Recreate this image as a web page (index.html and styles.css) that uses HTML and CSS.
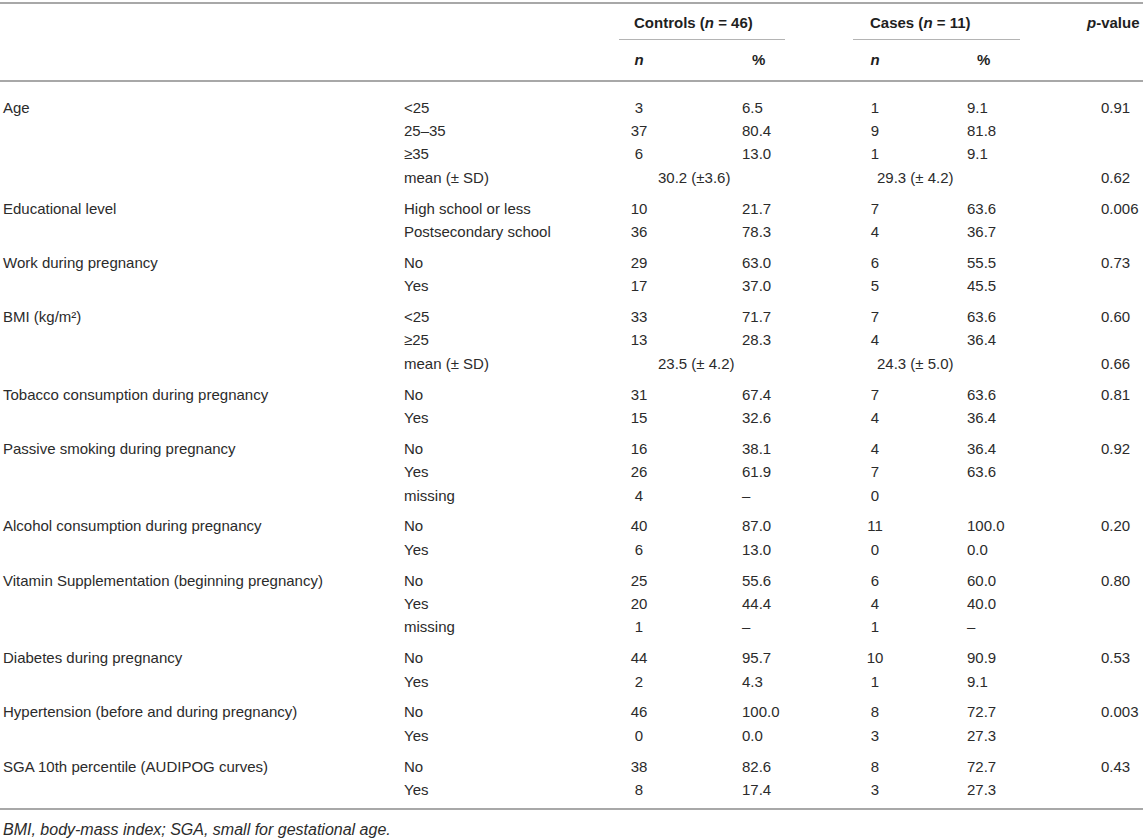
FILE: index.html
```html
<!DOCTYPE html>
<html lang="en">
<head>
<meta charset="utf-8">
<title>Characteristics of cases and controls</title>
<link rel="stylesheet" href="styles.css">
</head>
<body>
<div class="wrap">
<table class="tbl">
  <colgroup>
    <col class="w1"><col class="w2"><col class="w3"><col class="w4"><col class="w5"><col class="w6"><col class="w7">
  </colgroup>
  <thead>
    <tr class="h1">
      <th rowspan="2"></th>
      <th rowspan="2"></th>
      <th colspan="2" class="grp"><div class="grp-in grp-ctrl">Controls (<i>n</i> = 46)</div></th>
      <th colspan="2" class="grp"><div class="grp-in grp-case">Cases (<i>n</i> = 11)</div></th>
      <th rowspan="2" class="pv"><i>p</i>-value</th>
    </tr>
    <tr class="h2">
      <th class="cn"><i>n</i></th>
      <th class="hp-ctrl">%</th>
      <th class="cn"><i>n</i></th>
      <th class="hp-case">%</th>
    </tr>
  </thead>
  <tbody>
    <tr class="gs first"><td class="c1">Age</td><td class="c2">&lt;25</td><td class="cn">3</td><td class="pc">6.5</td><td class="cn">1</td><td class="pk">9.1</td><td class="p">0.91</td></tr>
    <tr><td class="c1"></td><td class="c2">25–35</td><td class="cn">37</td><td class="pc">80.4</td><td class="cn">9</td><td class="pk">81.8</td><td class="p"></td></tr>
    <tr><td class="c1"></td><td class="c2">≥35</td><td class="cn">6</td><td class="pc">13.0</td><td class="cn">1</td><td class="pk">9.1</td><td class="p"></td></tr>
    <tr><td class="c1"></td><td class="c2">mean (± SD)</td><td colspan="2" class="mc">30.2 (±3.6)</td><td colspan="2" class="mk">29.3 (± 4.2)</td><td class="p">0.62</td></tr>

    <tr class="gs"><td class="c1">Educational level</td><td class="c2">High school or less</td><td class="cn">10</td><td class="pc">21.7</td><td class="cn">7</td><td class="pk">63.6</td><td class="p">0.006</td></tr>
    <tr><td class="c1"></td><td class="c2">Postsecondary school</td><td class="cn">36</td><td class="pc">78.3</td><td class="cn">4</td><td class="pk">36.7</td><td class="p"></td></tr>

    <tr class="gs"><td class="c1">Work during pregnancy</td><td class="c2">No</td><td class="cn">29</td><td class="pc">63.0</td><td class="cn">6</td><td class="pk">55.5</td><td class="p">0.73</td></tr>
    <tr><td class="c1"></td><td class="c2">Yes</td><td class="cn">17</td><td class="pc">37.0</td><td class="cn">5</td><td class="pk">45.5</td><td class="p"></td></tr>

    <tr class="gs"><td class="c1">BMI (kg/m²)</td><td class="c2">&lt;25</td><td class="cn">33</td><td class="pc">71.7</td><td class="cn">7</td><td class="pk">63.6</td><td class="p">0.60</td></tr>
    <tr><td class="c1"></td><td class="c2">≥25</td><td class="cn">13</td><td class="pc">28.3</td><td class="cn">4</td><td class="pk">36.4</td><td class="p"></td></tr>
    <tr><td class="c1"></td><td class="c2">mean (± SD)</td><td colspan="2" class="mc">23.5 (± 4.2)</td><td colspan="2" class="mk">24.3 (± 5.0)</td><td class="p">0.66</td></tr>

    <tr class="gs"><td class="c1">Tobacco consumption during pregnancy</td><td class="c2">No</td><td class="cn">31</td><td class="pc">67.4</td><td class="cn">7</td><td class="pk">63.6</td><td class="p">0.81</td></tr>
    <tr><td class="c1"></td><td class="c2">Yes</td><td class="cn">15</td><td class="pc">32.6</td><td class="cn">4</td><td class="pk">36.4</td><td class="p"></td></tr>

    <tr class="gs"><td class="c1">Passive smoking during pregnancy</td><td class="c2">No</td><td class="cn">16</td><td class="pc">38.1</td><td class="cn">4</td><td class="pk">36.4</td><td class="p">0.92</td></tr>
    <tr><td class="c1"></td><td class="c2">Yes</td><td class="cn">26</td><td class="pc">61.9</td><td class="cn">7</td><td class="pk">63.6</td><td class="p"></td></tr>
    <tr><td class="c1"></td><td class="c2">missing</td><td class="cn">4</td><td class="pc">–</td><td class="cn">0</td><td class="pk"></td><td class="p"></td></tr>

    <tr class="gs"><td class="c1">Alcohol consumption during pregnancy</td><td class="c2">No</td><td class="cn">40</td><td class="pc">87.0</td><td class="cn">11</td><td class="pk">100.0</td><td class="p">0.20</td></tr>
    <tr><td class="c1"></td><td class="c2">Yes</td><td class="cn">6</td><td class="pc">13.0</td><td class="cn">0</td><td class="pk">0.0</td><td class="p"></td></tr>

    <tr class="gs"><td class="c1">Vitamin Supplementation (beginning pregnancy)</td><td class="c2">No</td><td class="cn">25</td><td class="pc">55.6</td><td class="cn">6</td><td class="pk">60.0</td><td class="p">0.80</td></tr>
    <tr><td class="c1"></td><td class="c2">Yes</td><td class="cn">20</td><td class="pc">44.4</td><td class="cn">4</td><td class="pk">40.0</td><td class="p"></td></tr>
    <tr><td class="c1"></td><td class="c2">missing</td><td class="cn">1</td><td class="pc">–</td><td class="cn">1</td><td class="pk">–</td><td class="p"></td></tr>

    <tr class="gs"><td class="c1">Diabetes during pregnancy</td><td class="c2">No</td><td class="cn">44</td><td class="pc">95.7</td><td class="cn">10</td><td class="pk">90.9</td><td class="p">0.53</td></tr>
    <tr><td class="c1"></td><td class="c2">Yes</td><td class="cn">2</td><td class="pc">4.3</td><td class="cn">1</td><td class="pk">9.1</td><td class="p"></td></tr>

    <tr class="gs"><td class="c1">Hypertension (before and during pregnancy)</td><td class="c2">No</td><td class="cn">46</td><td class="pc">100.0</td><td class="cn">8</td><td class="pk">72.7</td><td class="p">0.003</td></tr>
    <tr><td class="c1"></td><td class="c2">Yes</td><td class="cn">0</td><td class="pc">0.0</td><td class="cn">3</td><td class="pk">27.3</td><td class="p"></td></tr>

    <tr class="gs"><td class="c1">SGA 10th percentile (AUDIPOG curves)</td><td class="c2">No</td><td class="cn">38</td><td class="pc">82.6</td><td class="cn">8</td><td class="pk">72.7</td><td class="p">0.43</td></tr>
    <tr class="last"><td class="c1"></td><td class="c2">Yes</td><td class="cn">8</td><td class="pc">17.4</td><td class="cn">3</td><td class="pk">27.3</td><td class="p"></td></tr>
  </tbody>
</table>
<p class="note"><i>BMI, body-mass index; SGA, small for gestational age.</i></p>
</div>
</body>
</html>
```

FILE: styles.css
```css
html, body {
  margin: 0;
  padding: 0;
  background: #ffffff;
}

body {
  font-family: "Liberation Sans", Arial, Helvetica, sans-serif;
  color: #2b2b2b;
}

.wrap {
  padding-top: 2px;
  width: 1143px;
}

.tbl {
  width: 1143px;
  table-layout: fixed;
  border-collapse: separate;
  border-spacing: 0;
  border-top: 2px solid #a8a8a8;
  border-bottom: 2px solid #a8a8a8;
  font-size: 15px;
}

.w1 { width: 400px; }
.w2 { width: 200px; }
.w3 { width: 78px; }
.w4 { width: 162px; }
.w5 { width: 70px; }
.w6 { width: 170px; }
.w7 { width: 63px; }

.tbl th,
.tbl td {
  padding: 0;
  text-align: left;
  vertical-align: top;
  white-space: nowrap;
}

.tbl th {
  font-weight: bold;
  line-height: 18px;
  color: #1f1f1f;
}

.h1 th {
  padding-top: 10px;
}

.h2 th {
  padding-top: 11px;
  padding-bottom: 11px;
}

.tbl thead tr.h1 th[rowspan],
.h2 th {
  border-bottom: 2px solid #a8a8a8;
}

.grp-in {
  padding-bottom: 7px;
  border-bottom: 1px solid #b4b4b4;
}

.grp-ctrl {
  margin-left: 19px;
  width: 166px;
  padding-left: 15px;
  box-sizing: border-box;
}

.grp-case {
  margin-left: 13px;
  width: 167px;
  padding-left: 17px;
  box-sizing: border-box;
}

.pv {
  padding-left: 7px !important;
}

.hp-ctrl { padding-left: 74px !important; }
.hp-case { padding-left: 67px !important; }

.tbl td {
  line-height: 23.4px;
}

.tbl tr.gs td {
  padding-top: 7.4px;
}

.tbl tr.gs.first td {
  padding-top: 13.5px;
}

.tbl tr.last td {
  padding-bottom: 7px;
}

.c1 { padding-left: 3px !important; }
.c2 { padding-left: 4px !important; }
.tbl .cn { text-align: center; }
.pc { padding-left: 64px !important; }
.pk { padding-left: 57px !important; }
.p { padding-left: 21px !important; }
.mc { padding-left: 58px !important; }
.mk { padding-left: 37px !important; }

.note {
  margin: 10px 0 0 3px;
  font-size: 16px;
  line-height: 20px;
  color: #2b2b2b;
}
```
